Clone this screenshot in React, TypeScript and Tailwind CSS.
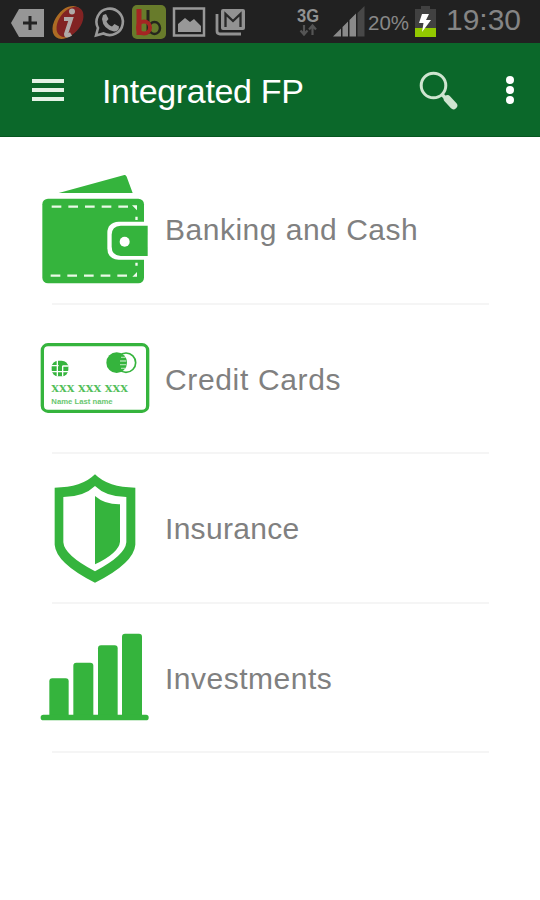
import type { ReactNode } from "react";

const GREEN = "#35b43d";

const WalletIcon = () => (
  <svg viewBox="0 -4 390 390" className="size-[130px] shrink-0" fill={GREEN}>
    <path d="M86 83 283 29q5-1 7 5l18 49z" />
    <rect x="37" y="100" width="305" height="254" rx="17" />
    <path
      d="M65 124H312M62 331H308"
      stroke="#e9f9e6"
      strokeWidth="7"
      strokeDasharray="29 21"
    />
    <path
      d="M306 120h15v15zM321 320v14h-14zM316 154h7v10h-7zM316 292h7v9h-7z"
      fill="#f2fbf0"
    />
    <path d="M346 169h-80q-34 2-34 34v46q0 32 34 34h80z" fill="#fff" />
    <path d="M353 181h-81q-27 2-27 27v36q0 26 27 28h81z" />
    <circle cx="284" cy="229" r="15" fill="#fff" />
  </svg>
);

const CardIcon = () => (
  <svg viewBox="0 -50 390 390" className="size-[130px] shrink-0" fill={GREEN}>
    <rect
      x="37"
      y="45"
      width="316"
      height="200"
      rx="17"
      fill="none"
      stroke={GREEN}
      strokeWidth="10"
    />
    <rect x="65" y="93" width="50" height="47" rx="20" />
    <path
      d="M64 108h22M64 126h51M98 109h17M82 92v48M98 108v32"
      stroke="#fff"
      strokeWidth="4"
      fill="none"
    />
    <circle cx="288" cy="99" r="29" fill="#fff" stroke={GREEN} strokeWidth="5" />
    <circle cx="260" cy="99" r="31" />
    <path
      d="M273 83h13M270 94h18M270 105h18M273 116h13"
      stroke="#a6dfa8"
      strokeWidth="4"
    />
    <text
      x="64"
      y="187"
      fontFamily="DejaVu Serif, serif"
      fontSize="29"
      fontWeight="700"
      textLength="230"
      lengthAdjust="spacingAndGlyphs"
      opacity="0.85"
    >
      XXX XXX XXX
    </text>
    <text
      x="64"
      y="223"
      fontFamily="Liberation Sans, sans-serif"
      fontSize="21"
      fontWeight="700"
      textLength="184"
      lengthAdjust="spacingAndGlyphs"
      opacity="0.75"
    >
      Name Last name
    </text>
  </svg>
);

const ShieldIcon = () => (
  <svg viewBox="0 -7 390 390" className="size-[130px] shrink-0" fill={GREEN}>
    <path d="M195 27q40 40 121 40V238q-4 55-121 114Q78 293 74 238V67q81 0 121-40z" />
    <path
      d="M195 62q34 33 94 33V231q-3 39-94 87Q103 270 100 231V95q61 0 95-33z"
      fill="#fff"
    />
    <path d="M195 92q30 26 75 25V229q-3 33-75 68z" />
  </svg>
);

const ChartIcon = () => (
  <svg viewBox="0 -23 390 390" className="size-[130px] shrink-0" fill={GREEN}>
    <rect x="58" y="176" width="58" height="118" rx="9" />
    <rect x="130" y="129" width="60" height="165" rx="9" />
    <rect x="204" y="77" width="59" height="217" rx="9" />
    <rect x="276" y="42" width="60" height="252" rx="9" />
    <rect x="32" y="285" width="324" height="17" rx="8" />
  </svg>
);

const NotificationIcons = () => (
  <svg viewBox="0 0 270 43" className="h-[43px] w-[270px] shrink-0">
    <path d="M19 9h25v28H19L11 23z" fill="#969696" />
    <path d="M30 16v14M23 23h14" stroke="#242424" strokeWidth="3" />
    <g transform="rotate(37 68 23)">
      <ellipse cx="67" cy="23" rx="12" ry="18.5" fill="#ad6c24" />
      <ellipse cx="69" cy="21" rx="11" ry="17" fill="#822323" />
    </g>
    <circle cx="72" cy="11.5" r="3" fill="#b0aaa8" />
    <path
      d="M64 19h7l-5 15q0 3 5 0"
      stroke="#b0aaa8"
      strokeWidth="4"
      fill="none"
    />
    <path
      d="M96 35.5l2-7.5a13.2 13.2 0 1 1 5.5 5.5z"
      fill="none"
      stroke="#999"
      strokeWidth="2.6"
    />
    <path
      d="M103 15l3-1 2.5 5-2 2.5q2 4 5.5 5l2.5-2.5 4.5 2.5q0 5-5 5Q103 29 102 19z"
      fill="#999"
    />
    <rect x="132" y="5" width="34" height="34" rx="5" fill="#687b2b" />
    <g fill="none">
      <path d="M148 10v24" stroke="#25251d" strokeWidth="3" />
      <ellipse cx="154.5" cy="28" rx="5.5" ry="6" stroke="#25251d" strokeWidth="2.5" />
      <path d="M139 9v26" stroke="#a52523" strokeWidth="5" />
      <ellipse cx="144" cy="27.5" rx="6" ry="6" stroke="#a52523" strokeWidth="4" />
    </g>
    <rect
      x="174"
      y="8.5"
      width="30"
      height="27"
      fill="none"
      stroke="#989898"
      strokeWidth="2.5"
    />
    <path d="M178 32V24l7-6 5 4 4-3 7 7v6z" fill="#989898" />
    <path
      d="M217 14v17q0 3 3 3h21"
      fill="none"
      stroke="#929292"
      strokeWidth="2.8"
    />
    <rect x="221" y="9" width="24" height="21" rx="2" fill="#929292" />
    <path
      d="M225.5 27V14l7.5 7 7.5-7v13"
      fill="none"
      stroke="#292929"
      strokeWidth="2.3"
    />
  </svg>
);

const SystemIcons = () => (
  <svg
    viewBox="270 0 270 43"
    className="h-[43px] w-[270px] shrink-0"
    fontFamily="Liberation Sans, Arial, sans-serif"
  >
    <text x="297" y="21.5" fill="#929292" fontSize="18" fontWeight="700" textLength="22" lengthAdjust="spacingAndGlyphs">
      3G
    </text>
    <path
      d="M304 25v9M300.500 30.500l3.500 4 3.500-4M312.500 35v-9M309 29.500l3.500-4 3.500 4"
      stroke="#555"
      strokeWidth="2.2"
      fill="none"
    />
    <path
      d="M333 36.5L341 28.5v8zM342.5 27L348 21.5v15h-5.5zM349.5 20L356 13.5v23h-6.5z"
      fill="#8a8a8a"
    />
    <path d="M357.5 13L364.5 6v30.5h-7z" fill="#484848" />
    <text x="368" y="30" fill="#888" fontSize="20" textLength="41" lengthAdjust="spacingAndGlyphs">
      20%
    </text>
    <path d="M415 9h6V6h9v3h6v20h-21z" fill="#414141" />
    <rect x="415" y="28" width="21" height="9" fill="#93c900" />
    <path d="M422 14h7l-3 6h5l-9 12 1.5-9H419z" fill="#fff" />
    <text x="446" y="30" fill="#858585" fontSize="30" textLength="75" lengthAdjust="spacingAndGlyphs">
      19:30
    </text>
  </svg>
);

const items: { label: string; icon: ReactNode; tracking: string }[] = [
  { label: "Banking and Cash", icon: <WalletIcon />, tracking: "tracking-[0.5px]" },
  { label: "Credit Cards", icon: <CardIcon />, tracking: "tracking-[0.65px]" },
  { label: "Insurance", icon: <ShieldIcon />, tracking: "tracking-[0.3px]" },
  { label: "Investments", icon: <ChartIcon />, tracking: "tracking-[0.5px]" },
];

const App = () => {
  return (
    <div className="h-[900px] w-[540px] overflow-hidden bg-white font-['Liberation_Sans',Arial,sans-serif]">
      <div className="flex h-[43px] bg-[#212121]">
        <NotificationIcons />
        <SystemIcons />
      </div>

      <header className="flex h-[94px] items-center border-b border-[#06561f] bg-[#0b682a] pl-8 text-white">
        <button className="flex w-8 flex-col gap-[5px]" aria-label="Menu">
          <span className="h-1 w-full bg-[#e4f2e5]" />
          <span className="h-1 w-full bg-[#e4f2e5]" />
          <span className="h-1 w-full bg-[#e4f2e5]" />
        </button>
        <h1 className="ml-[38px] flex-1 whitespace-nowrap pt-0.5 text-[34px] leading-none tracking-[-0.35px]">
          Integrated FP
        </h1>
        <button aria-label="Search" className="w-[70px]">
          <svg viewBox="400 43 70 94" className="h-[94px] w-[70px]" fill="none">
            <circle cx="433.5" cy="85.5" r="12.3" stroke="#cfe5d0" strokeWidth="3" />
            <path d="M441.5 94l4 4" stroke="#cfe5d0" strokeWidth="3.5" />
            <path
              d="M447.500 99l6 6.500"
              stroke="#cfe5d0"
              strokeWidth="7.5"
              strokeLinecap="round"
            />
          </svg>
        </button>
        <button
          aria-label="More options"
          className="flex w-[70px] flex-col items-center gap-0.5 pl-[9px]"
        >
          <span className="size-2 rounded-full bg-white" />
          <span className="size-2 rounded-full bg-white" />
          <span className="size-2 rounded-full bg-white" />
        </button>
      </header>

      <ul className="pt-[18px]">
        {items.map(({ label, icon, tracking }) => (
          <li key={label} className="flex h-[149.5px] flex-col">
            <div className="flex flex-1 items-center pl-[30px]">
              {icon}
              <span
                className={`ml-[5px] whitespace-nowrap pt-[3px] text-[30px] leading-none text-[#808080] ${tracking}`}
              >
                {label}
              </span>
            </div>
            <div className="ml-[52px] h-0.5 w-[437px] bg-[#f5f5f5]" />
          </li>
        ))}
      </ul>
    </div>
  );
};

export default App;
